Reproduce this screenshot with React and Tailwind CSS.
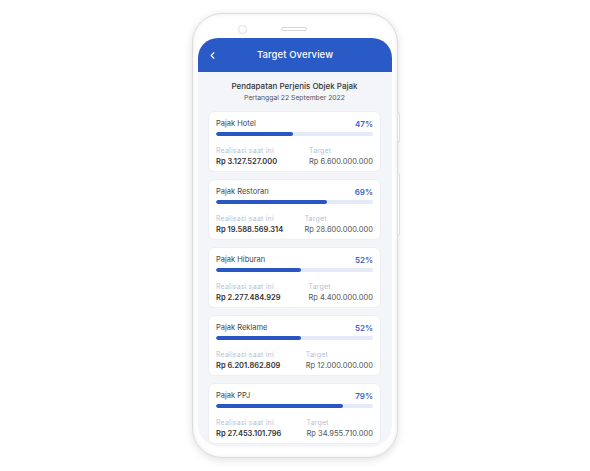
import { ChevronLeft } from 'lucide-react'

const items = [
  { name: 'Pajak Hotel', pct: 47, real: 'Rp 3.127.527.000', target: 'Rp 6.600.000.000' },
  { name: 'Pajak Restoran', pct: 69, real: 'Rp 19.588.569.314', target: 'Rp 28.600.000.000' },
  { name: 'Pajak Hiburan', pct: 52, real: 'Rp 2.277.484.929', target: 'Rp 4.400.000.000' },
  { name: 'Pajak Reklame', pct: 52, real: 'Rp 6.201.862.809', target: 'Rp 12.000.000.000' },
  { name: 'Pajak PPJ', pct: 79, real: 'Rp 27.453.101.796', target: 'Rp 34.955.710.000' },
]

function TargetCard({ item }) {
  return (
    <div className="bg-white rounded-[7px] border border-[#eceef3] px-[7px] pt-[6px] pb-[4px]">
      <div className="flex items-center justify-between h-[11px]">
        <span className="text-[7.5px] text-[#444]">{item.name}</span>
        <span className="text-[8px] font-semibold text-[#3a62c6]">{item.pct}%</span>
      </div>
      <div className="mt-[3px] h-[4px] rounded-full bg-[#e4eaf8] overflow-hidden">
        <div className="h-full rounded-full bg-[#2956c3]" style={{ width: `calc(${item.pct}% + 3px)` }} />
      </div>
      <div className="mt-[10px] flex justify-between">
        <div>
          <p className="text-[7px] leading-[10px] tracking-[0.2px] text-[#b9bfd3]">Realisasi saat ini</p>
          <p className="text-[7.5px] leading-[11px] font-semibold text-[#333]">{item.real}</p>
        </div>
        <div>
          <p className="text-[7px] leading-[10px] tracking-[0.2px] text-[#b9bfd3]">Target</p>
          <p className="text-[7.5px] leading-[11px] text-[#555]">{item.target}</p>
        </div>
      </div>
    </div>
  )
}

export default function App() {
  return (
    <div className="w-[590px] h-[471px] bg-white flex justify-center pt-[13px] font-['Inter',sans-serif]">
      <div className="relative w-[206px] h-[445px] rounded-[30px] bg-white border border-[#dcdcdc] shadow-[0_2px_8px_rgba(0,0,0,0.12),inset_0_0_4px_rgba(0,0,0,0.08)] pl-[5px] pr-[5px] pt-[24px] pb-[10px] flex flex-col">
        {/* camera + speaker */}
        <div className="absolute top-[11px] left-[45px] w-[9px] h-[9px] rounded-full border border-[#dcdcdc]" />
        <div className="absolute top-[13px] left-[88px] w-[26px] h-[4px] rounded-full border border-[#d6d6d6]" />
        {/* side buttons */}
        <div className="absolute -right-[3px] top-[98px] w-[3px] h-[31px] rounded-r-sm bg-white border border-[#dedede]" />
        <div className="absolute -right-[3px] top-[159px] w-[3px] h-[63px] rounded-r-sm bg-white border border-[#dedede]" />

        <div className="flex-1 rounded-t-[20px] rounded-b-[22px] overflow-hidden bg-[#f4f5f8] flex flex-col">
          <div className="h-[34px] shrink-0 bg-[#2a5ac5] relative flex items-center justify-center">
            <ChevronLeft className="absolute left-[9px] text-white" size={11} strokeWidth={2.5} />
            <span className="text-[9.5px] font-medium tracking-[0.1px] text-white">Target Overview</span>
          </div>
          <div className="pl-[10px] pr-[11px] pt-[8px]">
            <p className="text-center text-[8px] leading-[12px] font-medium text-[#333]">Pendapatan Perjenis Objek Pajak</p>
            <p className="text-center text-[6.8px] leading-[11px] text-[#555]">Pertanggal 22 September 2022</p>
            <div className="mt-[8px] flex flex-col gap-[7px]">
              {items.map(it => <TargetCard key={it.name} item={it} />)}
            </div>
          </div>
        </div>
      </div>
    </div>
  )
}
